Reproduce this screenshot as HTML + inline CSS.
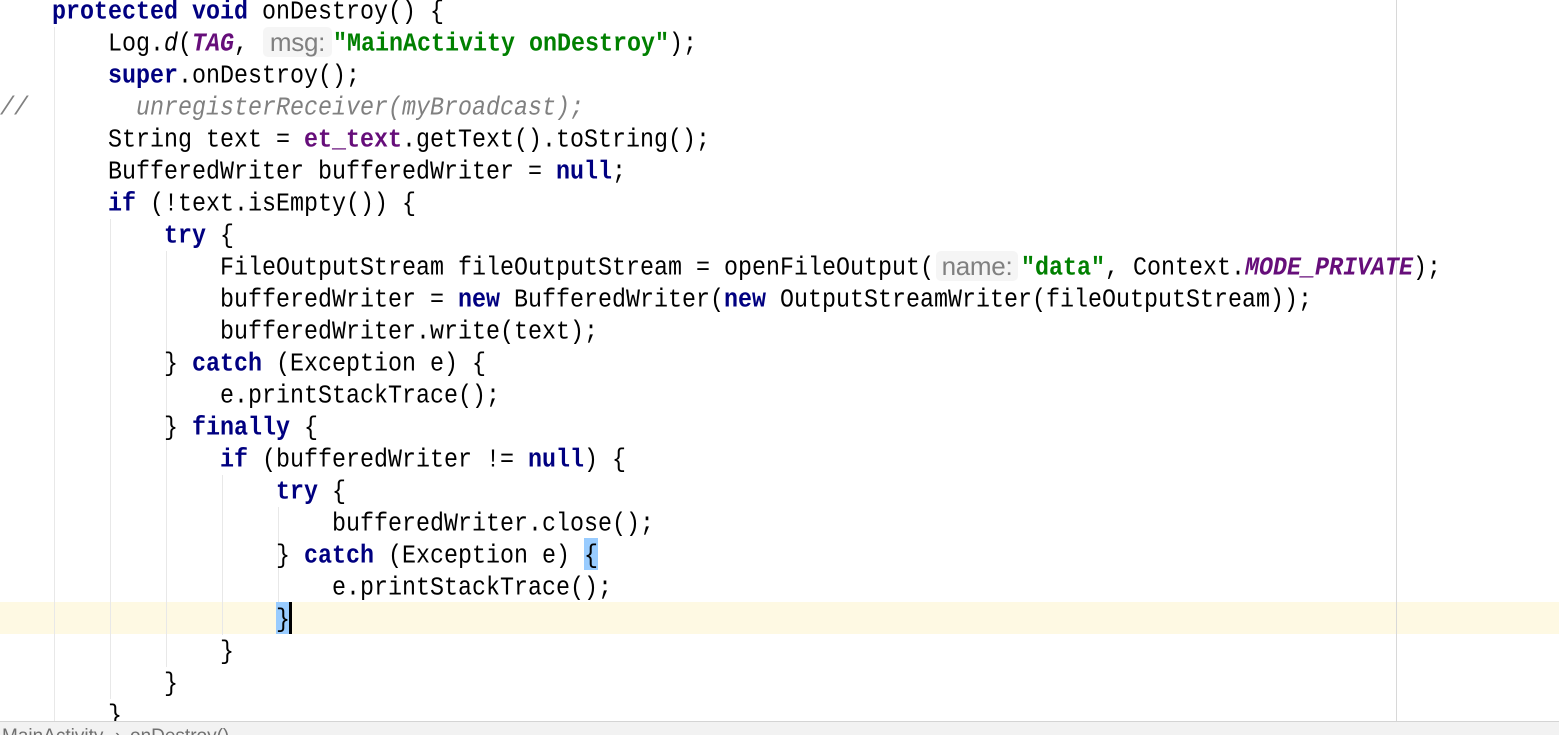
<!DOCTYPE html>
<html><head><meta charset="utf-8"><style>
html,body{margin:0;padding:0;background:#fff}
#p{position:relative;width:1559px;height:735px;overflow:hidden;background:#fff;font-family:"Liberation Mono",monospace;font-size:23.33px;color:#000}
.l{position:absolute;white-space:pre;line-height:32px;height:32px;transform:translateY(2px) scaleY(1.12);transform-origin:0 50%}
.k{color:#000080;font-weight:bold}
.f{color:#660e7a;font-weight:bold}
.i{font-style:italic}
.s{color:#008000;font-weight:bold}
.c{color:#808080;font-style:italic}
.g{position:absolute;width:1px;background:#e8e8e8}
.h{position:absolute;background:#f5f5f5;border-radius:5px;color:#808080;font-family:"Liberation Sans",sans-serif;font-size:26px;line-height:30px;text-align:center;height:30px;letter-spacing:-0.3px}
.b{position:absolute;background:#99ccff}
</style></head><body><div id="p">
<div style="position:absolute;left:0;top:602px;width:1559px;height:32px;background:#fef9e3"></div>
<div style="position:absolute;left:1396px;top:0;width:1px;height:721px;background:#d8d8d8"></div>
<div class="g" style="left:54px;top:27px;height:694px"></div>
<div class="g" style="left:110px;top:219px;height:480px"></div>
<div class="g" style="left:166px;top:251px;height:416px"></div>
<div class="g" style="left:222px;top:475px;height:160px"></div>
<div class="g" style="left:278px;top:507px;height:96px"></div>
<div class="b" style="left:584px;top:538px;width:14px;height:32px"></div>
<div class="b" style="left:276px;top:602px;width:14px;height:32px"></div>
<div style="position:absolute;left:289px;top:602px;width:3px;height:32px;background:#000;z-index:3"></div>
<div class="h" style="left:263px;top:27px;width:69px">msg:</div>
<div class="h" style="left:936px;top:251px;width:82px">name:</div>
<div class="l" style="left:52px;top:-5px"><span class="k">protected void</span> onDestroy() {</div>
<div class="l" style="left:108px;top:27px">Log.<span class="i">d</span>(<span class="f i">TAG</span>,</div>
<div class="l" style="left:333px;top:27px"><span class="s">"MainActivity onDestroy"</span>);</div>
<div class="l" style="left:108px;top:59px"><span class="k">super</span>.onDestroy();</div>
<div class="l c" style="left:0;top:91px">//</div>
<div class="l c" style="left:136px;top:91px">unregisterReceiver(myBroadcast);</div>
<div class="l" style="left:108px;top:123px">String text = <span class="f">et_text</span>.getText().toString();</div>
<div class="l" style="left:108px;top:155px">BufferedWriter bufferedWriter = <span class="k">null</span>;</div>
<div class="l" style="left:108px;top:187px"><span class="k">if</span> (!text.isEmpty()) {</div>
<div class="l" style="left:164px;top:219px"><span class="k">try</span> {</div>
<div class="l" style="left:220px;top:251px">FileOutputStream fileOutputStream = openFileOutput(</div>
<div class="l" style="left:1021px;top:251px"><span class="s">"data"</span>, Context.<span class="f i">MODE_PRIVATE</span>);</div>
<div class="l" style="left:220px;top:283px">bufferedWriter = <span class="k">new</span> BufferedWriter(<span class="k">new</span> OutputStreamWriter(fileOutputStream));</div>
<div class="l" style="left:220px;top:315px">bufferedWriter.write(text);</div>
<div class="l" style="left:164px;top:347px">} <span class="k">catch</span> (Exception e) {</div>
<div class="l" style="left:220px;top:379px">e.printStackTrace();</div>
<div class="l" style="left:164px;top:411px">} <span class="k">finally</span> {</div>
<div class="l" style="left:220px;top:443px"><span class="k">if</span> (bufferedWriter != <span class="k">null</span>) {</div>
<div class="l" style="left:276px;top:475px"><span class="k">try</span> {</div>
<div class="l" style="left:332px;top:507px">bufferedWriter.close();</div>
<div class="l" style="left:276px;top:539px">} <span class="k">catch</span> (Exception e) {</div>
<div class="l" style="left:332px;top:571px">e.printStackTrace();</div>
<div class="l" style="left:276px;top:603px">}</div>
<div class="l" style="left:220px;top:635px">}</div>
<div class="l" style="left:164px;top:667px">}</div>
<div class="l" style="left:108px;top:699px">}</div>
<div style="position:absolute;left:0;top:721px;width:1559px;height:14px;background:#f2f2f2;border-top:1px solid #d4d4d4;box-sizing:border-box;overflow:hidden;z-index:5;font-family:'Liberation Sans',sans-serif;font-size:19px;line-height:22px;color:#707070;white-space:pre"><span style="position:absolute;left:2px;top:4px">MainActivity</span><span style="position:absolute;left:115px;top:4px">›</span><span style="position:absolute;left:130px;top:4px">onDestroy()</span></div>
</div></body></html>
